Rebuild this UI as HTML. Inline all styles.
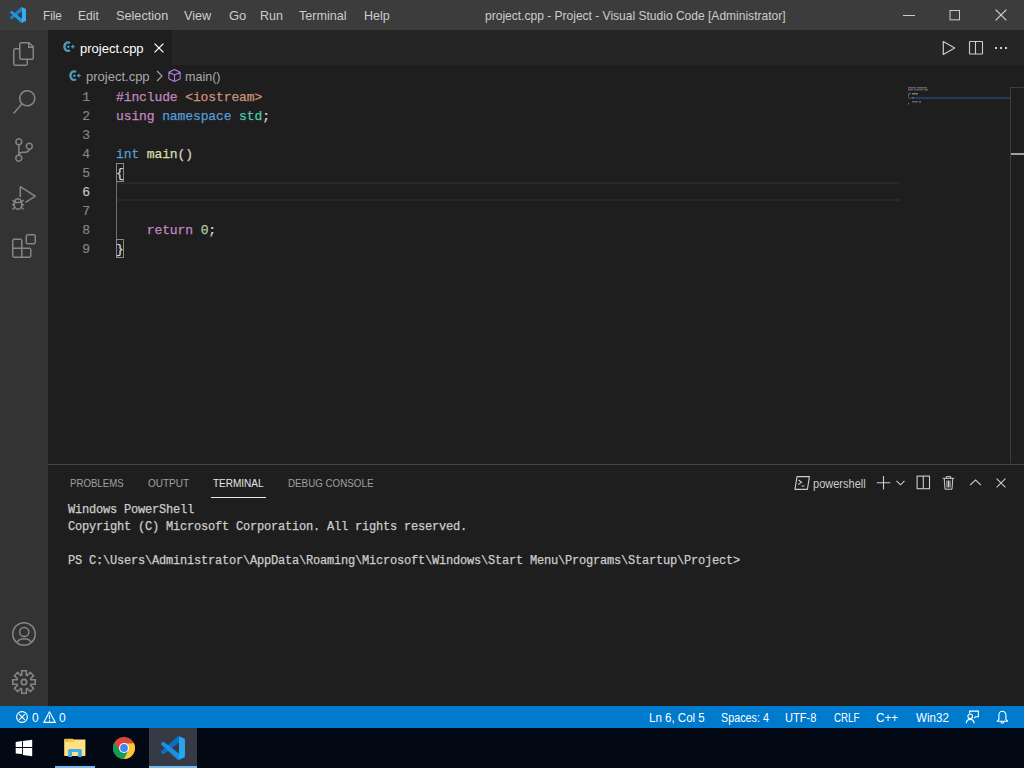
<!DOCTYPE html>
<html><head><meta charset="utf-8">
<style>
*{margin:0;padding:0;box-sizing:border-box}
html,body{width:1024px;height:768px;overflow:hidden;background:#1e1e1e;font-family:"Liberation Sans",sans-serif;}
.abs{position:absolute}
svg{position:absolute;overflow:visible}
#title{left:0;top:0;width:1024px;height:30px;background:#3c3c3c;color:#cccccc;font-size:13px}
.m{position:absolute;top:8px;white-space:nowrap;line-height:15px}
#act{left:0;top:30px;width:48px;height:676px;background:#333333}
#tabs{left:48px;top:30px;width:976px;height:35px;background:#252526}
#tab{left:48px;top:30px;width:124px;height:35px;background:#1e1e1e}
#panel{left:48px;top:464px;width:976px;height:242px;background:#1e1e1e;border-top:1px solid #444}
#status{left:0;top:706px;width:1024px;height:22px;background:#007acc;color:#fff;font-size:12px}
#task{left:0;top:728px;width:1024px;height:40px;background:#020814}
.code{font-family:"Liberation Mono",monospace;font-size:13px;white-space:pre;position:absolute;line-height:19px;letter-spacing:-0.11px;-webkit-text-stroke:0.25px currentColor}
.ln{position:absolute;left:48px;width:42px;text-align:right;font-family:"Liberation Mono",monospace;font-size:13px;line-height:19px;color:#858585;-webkit-text-stroke:0.2px currentColor}
.term{font-family:"Liberation Mono",monospace;font-size:12px;white-space:pre;position:absolute;line-height:17px;color:#cccccc;letter-spacing:-0.2px;-webkit-text-stroke:0.25px currentColor}
.ptab{position:absolute;top:477px;font-size:11px;color:#a0a0a0;line-height:13px;white-space:nowrap}
.st{position:absolute;top:711px;line-height:14px;white-space:nowrap}
.k{color:#c586c0}.s{color:#ce9178}.b{color:#569cd6}.t{color:#4ec9b0}.p{color:#d4d4d4}.f{color:#dcdcaa}.n{color:#b5cea8}
</style></head><body>
<div id="title" class="abs">
  <svg style="left:10px;top:7px" width="16" height="16" viewBox="0 0 100 100"><path fill="#1a84d0" d="M75.8 0.9L75 27.3 12.2 75a4.2 4.2 0 0 1-5.3-.2l-5.5-5a4.2 4.2 0 0 1 0-6.2L68.7 2.1a6.2 6.2 0 0 1 7.1-1.2z"/><path fill="#2196e4" d="M12.2 25L75 72.7 75.8 99.1a6.2 6.2 0 0 1-7.1-1.2L1.4 36.5a4.2 4.2 0 0 1 0-6.2l5.5-5a4.2 4.2 0 0 1 5.3-.2z"/><path fill="#3aabf2" d="M75 .9 96.4 10.8a6.3 6.3 0 0 1 3.5 5.6v67.2a6.3 6.3 0 0 1-3.5 5.6L75.8 99.1 75 99.3z"/></svg>
  <div class="m" style="transform:scaleX(0.900);transform-origin:0 0;left:43px">File</div>
  <div class="m" style="transform:scaleX(0.926);transform-origin:0 0;left:78px">Edit</div>
  <div class="m" style="transform:scaleX(0.977);transform-origin:0 0;left:116px">Selection</div>
  <div class="m" style="transform:scaleX(0.975);transform-origin:0 0;left:184px">View</div>
  <div class="m" style="left:229px">Go</div>
  <div class="m" style="transform:scaleX(0.957);transform-origin:0 0;left:260px">Run</div>
  <div class="m" style="transform:scaleX(0.969);transform-origin:0 0;left:299px">Terminal</div>
  <div class="m" style="transform:scaleX(0.963);transform-origin:0 0;left:364px">Help</div>
  <div class="m" style="transform:scaleX(0.925);transform-origin:0 0;left:485px">project.cpp - Project - Visual Studio Code [Administrator]</div>
  <svg style="left:903px;top:15px" width="12" height="1"><rect x="0" y="0" width="12" height="1" fill="#cccccc"/></svg>
  <svg style="left:949px;top:10px" width="11" height="11"><rect x="1" y="0.5" width="9.5" height="9.3" fill="none" stroke="#cccccc" stroke-width="1"/></svg>
  <svg style="left:995px;top:9px" width="12" height="12"><path d="M0.6 0.6L11.4 11.4M11.4 0.6L0.6 11.4" stroke="#cccccc" stroke-width="1.3"/></svg>
</div>

<div id="act" class="abs">
  <!-- files -->
  <svg style="left:12px;top:12px" width="24" height="24" viewBox="0 0 24 24"><path fill="#858585" d="M17.5 0h-9L7 1.5V6H2.5L1 7.5v15.07L2.5 24h12.07L16 22.57V18h4.7l1.3-1.43V4.5L17.5 0zm0 2.12l2.38 2.38H17.5V2.12zm-3 20.38h-12v-15H7v9.07L8.5 18h6v4.5zm6-6h-12v-15H16V6h4.5v10.5z"/></svg>
  <!-- search -->
  <svg style="left:12px;top:60px" width="24" height="24" viewBox="0 0 24 24"><path fill="#858585" d="M15.25 0a8.25 8.25 0 0 0-6.18 13.72L1 22.88l1.12 1 8.05-9.12A8.251 8.251 0 1 0 15.25.01V0zm0 15a6.75 6.75 0 1 1 0-13.5 6.75 6.75 0 0 1 0 13.5z"/></svg>
  <!-- scm -->
  <svg style="left:12px;top:108px" width="24" height="24" viewBox="0 0 24 24"><path fill="#858585" d="M21.007 8.222A3.738 3.738 0 0 0 15.045 5.2a3.737 3.737 0 0 0 1.156 6.583 2.988 2.988 0 0 1-2.668 1.67h-2.99a4.456 4.456 0 0 0-2.989 1.165V7.4a3.737 3.737 0 1 0-1.494 0v9.117a3.776 3.776 0 1 0 1.816.099 2.99 2.99 0 0 1 2.668-1.667h2.99a4.484 4.484 0 0 0 4.223-3.039 3.736 3.736 0 0 0 3.250-3.687zM4.565 3.738a2.242 2.242 0 1 1 4.484 0 2.242 2.242 0 0 1-4.484 0zm4.484 16.441a2.242 2.242 0 1 1-4.484 0 2.242 2.242 0 0 1 4.484 0zm8.221-9.715a2.242 2.242 0 1 1 0-4.485 2.242 2.242 0 0 1 0 4.485z"/></svg>
  <!-- debug -->
  <svg style="left:12px;top:156px" width="24" height="24" viewBox="0 0 24 24"><path fill="#858585" d="M10.94 13.5l-1.32 1.32a3.73 3.73 0 0 0-7.24 0L1.06 13.5 0 14.56l1.72 1.72-.22.22V18H0v1.5h1.5v.08c.077.489.214.966.41 1.42L0 22.94 1.06 24l1.65-1.65A4.308 4.308 0 0 0 6 24a4.31 4.31 0 0 0 3.29-1.650L10.94 24 12 22.94 10.09 21c.198-.464.336-.951.41-1.45v-.1H12V18h-1.5v-1.5l-.22-.22L12 14.56l-1.06-1.06zM6 13.5a2.25 2.25 0 0 1 2.25 2.25h-4.5A2.25 2.25 0 0 1 6 13.5zm3 6a3.33 3.33 0 0 1-3 3 3.33 3.33 0 0 1-3-3v-2.25h6v2.25zm14.76-9.9v1.26L13.5 17.37V15.6l8.45-5.37L9 2v9.46a5.07 5.07 0 0 0-1.500-.72V.63L8.64 0l15.12 9.6z"/></svg>
  <!-- extensions -->
  <svg style="left:12px;top:204px" width="24" height="24" viewBox="0 0 24 24"><path fill="#858585" d="M13.5 1.5L15 0h7.5L24 1.5V9l-1.5 1.5H15L13.5 9V1.5zm1.5 0V9h7.5V1.5H15zM0 15V6l1.5-1.5H9L10.5 6v7.5H18l1.5 1.5v7.5L18 24H1.5L0 22.5V15zm9-1.5V6H1.5v7.5H9zM9 15H1.5v7.5H9V15zm1.5 7.5H18V15h-7.5v7.5z"/></svg>
  <!-- accounts -->
  <svg style="left:12px;top:592px" width="24" height="24" viewBox="0 0 24 24"><circle cx="12" cy="12" r="11.25" fill="none" stroke="#858585" stroke-width="1.5"/><circle cx="12.2" cy="10" r="4.6" fill="none" stroke="#858585" stroke-width="1.5"/><path d="M4.8 20.6A8.2 6.6 0 0 1 19.6 20.6" fill="none" stroke="#858585" stroke-width="1.5"/></svg>
  <!-- gear -->
  <svg style="left:12px;top:640px" width="24" height="24" viewBox="0 0 24 24"><path d="M9.70 5.07L9.70 0.80L14.30 0.80L14.30 5.07A7.30 7.30 0 0 1 15.27 5.47L18.29 2.45L21.55 5.71L18.53 8.73A7.30 7.30 0 0 1 18.93 9.70L23.20 9.70L23.20 14.30L18.93 14.30A7.30 7.30 0 0 1 18.53 15.27L21.55 18.29L18.29 21.55L15.27 18.53A7.30 7.30 0 0 1 14.30 18.93L14.30 23.20L9.70 23.20L9.70 18.93A7.30 7.30 0 0 1 8.73 18.53L5.71 21.55L2.45 18.29L5.47 15.27A7.30 7.30 0 0 1 5.07 14.30L0.80 14.30L0.80 9.70L5.07 9.70A7.30 7.30 0 0 1 5.47 8.73L2.45 5.71L5.71 2.45L8.73 5.47A7.30 7.30 0 0 1 9.70 5.07Z" fill="none" stroke="#858585" stroke-width="1.6" stroke-linejoin="miter"/><circle cx="12" cy="12" r="2.7" fill="none" stroke="#858585" stroke-width="1.7"/></svg>
</div>

<div id="tabs" class="abs"></div>
<div id="tab" class="abs"></div>
<!-- tab content -->
<svg style="left:62px;top:41px" width="13" height="12" viewBox="0 0 13 12"><path d="M7.9 2.1A3.4 4.3 0 1 0 7.9 9.1" fill="none" stroke="#519aba" stroke-width="2.3"/><path d="M5 5.7h2.6M6.3 4.4v2.6M8.9 5.7h3.8M10.8 3.8v3.8" stroke="#519aba" stroke-width="1.2"/></svg>
<div class="abs" style="left:80px;top:41px;font-size:13px;color:#ffffff;line-height:15px;white-space:nowrap">project.cpp</div>
<svg style="left:153.5px;top:43px" width="10" height="10"><path d="M0.6 0.6L9.4 9.4M9.4 0.6L0.6 9.4" stroke="#ffffff" stroke-width="1.3"/></svg>
<!-- tab actions -->
<svg style="left:942px;top:40px" width="14" height="16" viewBox="0 0 14 16"><path d="M1.3 1.6v12.8L12.7 8z" fill="none" stroke="#cccccc" stroke-width="1.2" stroke-linejoin="round"/></svg>
<svg style="left:968px;top:40px" width="16" height="16"><rect x="1.5" y="1.5" width="13" height="12.5" fill="none" stroke="#cccccc" stroke-width="1.1" rx="0.5"/><path d="M7.5 1.5v12.5" stroke="#cccccc" stroke-width="1.1"/></svg>
<svg style="left:995px;top:47px" width="14" height="3"><rect x="0" y="0" width="2" height="2" fill="#cccccc"/><rect x="5" y="0" width="2" height="2" fill="#cccccc"/><rect x="10" y="0" width="2" height="2" fill="#cccccc"/></svg>
<!-- breadcrumbs -->
<svg style="left:68px;top:70px" width="13" height="12" viewBox="0 0 13 12"><path d="M7.9 2.1A3.4 4.3 0 1 0 7.9 9.1" fill="none" stroke="#519aba" stroke-width="2.3"/><path d="M5 5.7h2.6M6.3 4.4v2.6M8.9 5.7h3.8M10.8 3.8v3.8" stroke="#519aba" stroke-width="1.2"/></svg>
<div class="abs" style="left:86px;top:69px;font-size:13px;color:#a9a9a9;line-height:15px;white-space:nowrap">project.cpp</div>
<svg style="left:155.5px;top:70px" width="7" height="12"><path d="M1 1l5 5-5 5" fill="none" stroke="#a9a9a9" stroke-width="1.1"/></svg>
<svg style="left:167px;top:68px" width="15" height="15" viewBox="0 0 16 16"><path d="M8 1.5L14 4.5V11.5L8 14.5L2 11.5V4.5Z M2 4.5L8 7.5L14 4.5 M8 7.5V14.5" fill="none" stroke="#b180d7" stroke-width="1.15" stroke-linejoin="round"/></svg>
<div class="abs" style="transform:scaleX(0.965);transform-origin:0 0;left:185px;top:69px;font-size:13px;color:#a9a9a9;line-height:15px;white-space:nowrap">main()</div>
<!-- editor -->
<div class="abs" style="left:116px;top:182px;width:784px;height:19px;border-top:2px solid #282828;border-bottom:2px solid #282828"></div>
<div class="abs" style="left:116px;top:182px;width:1px;height:57px;background:#707070"></div>
<div class="abs" style="left:116px;top:163px;width:8px;height:19px;border:1px solid #888888;background:#0f2a1a33"></div>
<div class="abs" style="left:116px;top:239px;width:8px;height:19px;border:1px solid #888888;background:#0f2a1a33"></div>
<div class="ln" style="top:88px">1</div>
<div class="ln" style="top:107px">2</div>
<div class="ln" style="top:126px">3</div>
<div class="ln" style="top:145px">4</div>
<div class="ln" style="top:164px">5</div>
<div class="ln" style="top:183px;color:#c6c6c6">6</div>
<div class="ln" style="top:202px">7</div>
<div class="ln" style="top:221px">8</div>
<div class="ln" style="top:240px">9</div>
<div class="code" style="left:116px;top:88px"><span class="k">#include</span> <span class="s">&lt;iostream&gt;</span>
<span class="k">using</span> <span class="b">namespace</span> <span class="t">std</span><span class="p">;</span>

<span class="b">int</span> <span class="f">main</span><span class="p">()</span>
<span class="p">{</span>


<span class="p">    </span><span class="k">return</span> <span class="n">0</span><span class="p">;</span>
<span class="p">}</span></div>
<!-- minimap -->
<div class="abs" style="left:908px;top:97px;width:102px;height:2px;background:#223d5c"></div>
<svg style="left:908px;top:87px" width="100" height="20">
<rect x="0" y="0" width="8" height="1.5" fill="#c586c0" opacity="0.5"/><rect x="9" y="0" width="10" height="1.5" fill="#ce9178" opacity="0.5"/>
<rect x="0" y="2" width="5" height="1.5" fill="#c586c0" opacity="0.5"/><rect x="6" y="2" width="9" height="1.5" fill="#569cd6" opacity="0.5"/><rect x="16" y="2" width="4" height="1.5" fill="#4ec9b0" opacity="0.5"/>
<rect x="0" y="6" width="3" height="1.5" fill="#569cd6" opacity="0.5"/><rect x="4" y="6" width="6" height="1.5" fill="#dcdcaa" opacity="0.5"/>
<rect x="0" y="8" width="1" height="1.5" fill="#d4d4d4" opacity="0.5"/>
<rect x="4" y="10" width="2" height="1.5" fill="#3b8eea" opacity="0.6"/>
<rect x="4" y="14" width="6" height="1.5" fill="#c586c0" opacity="0.5"/><rect x="11" y="14" width="2" height="1.5" fill="#b5cea8" opacity="0.5"/>
<rect x="0" y="16" width="1" height="1.5" fill="#d4d4d4" opacity="0.5"/>
</svg>
<div class="abs" style="left:1010px;top:87px;width:1px;height:376px;background:#3e3e3e"></div>
<div class="abs" style="left:1011px;top:87px;width:13px;height:1px;background:#3e3e3e"></div>
<div class="abs" style="left:1011px;top:153px;width:13px;height:2px;background:#a0a0a0"></div>

<div id="panel" class="abs"></div>
<div class="ptab" style="transform:scaleX(0.877);transform-origin:0 0;left:70px">PROBLEMS</div>
<div class="ptab" style="transform:scaleX(0.909);transform-origin:0 0;left:148px">OUTPUT</div>
<div class="ptab" style="transform:scaleX(0.909);transform-origin:0 0;left:213px;color:#e7e7e7">TERMINAL</div>
<div class="ptab" style="transform:scaleX(0.890);transform-origin:0 0;left:288px">DEBUG CONSOLE</div>
<div class="abs" style="left:211px;top:497px;width:55px;height:1px;background:#e7e7e7"></div>
<!-- panel actions -->
<svg style="left:794px;top:476px" width="16" height="14" viewBox="0 0 16 14"><path d="M3 0.6h12.4l-2 12.8H1z" fill="none" stroke="#cccccc" stroke-width="1.1" stroke-linejoin="round"/><path d="M4.5 4l3 2.3-3.3 2.3M7.5 10h3" fill="none" stroke="#cccccc" stroke-width="1.1"/></svg>
<div class="abs" style="transform:scaleX(0.919);transform-origin:0 0;left:813px;top:477px;font-size:12px;color:#cccccc;line-height:14px;white-space:nowrap">powershell</div>
<svg style="left:876px;top:476px" width="15" height="14"><path d="M7.5 0v13.5M0.8 6.8h13.5" stroke="#cccccc" stroke-width="1.1"/></svg>
<svg style="left:896px;top:480px" width="9" height="6"><path d="M0.5 0.8l4 4 4-4" fill="none" stroke="#cccccc" stroke-width="1.1"/></svg>
<svg style="left:916px;top:475px" width="15" height="15"><rect x="1.1" y="1.1" width="12.4" height="12.6" fill="none" stroke="#cccccc" stroke-width="1.1"/><path d="M7.3 1v12.5" stroke="#cccccc" stroke-width="1.1"/></svg>
<svg style="left:942px;top:476px" width="13" height="14" viewBox="0 0 13 14"><path d="M0.8 2.3h11.4M4.3 2.3V0.6h4.4v1.7M2.2 2.3l0.8 10.9h7l0.8-10.9M5 4.5v7M6.5 4.5v7M8 4.5v7" fill="none" stroke="#cccccc" stroke-width="1"/></svg>
<svg style="left:969px;top:479px" width="13" height="7"><path d="M1 6.2l5.5-5.2 5.5 5.2" fill="none" stroke="#cccccc" stroke-width="1.1"/></svg>
<svg style="left:996px;top:478px" width="10" height="10"><path d="M0.6 0.6L9.4 9.4M9.4 0.6L0.6 9.4" stroke="#cccccc" stroke-width="1.1"/></svg>
<div class="term" style="left:68px;top:502px">Windows PowerShell
Copyright (C) Microsoft Corporation. All rights reserved.

PS C:\Users\Administrator\AppData\Roaming\Microsoft\Windows\Start Menu\Programs\Startup\Project&gt;</div>
<div id="status" class="abs"></div>
<svg style="left:16px;top:711px" width="12" height="12" viewBox="0 0 12 12"><circle cx="6" cy="6" r="5.4" fill="none" stroke="#fff" stroke-width="1.1"/><path d="M3.1 3.1l5.8 5.8M8.9 3.1l-5.8 5.8" stroke="#fff" stroke-width="1.1"/></svg>
<div class="st" style="left:32px;color:#fff;font-size:12px">0</div>
<svg style="left:43px;top:711px" width="13" height="12" viewBox="0 0 13 12"><path d="M6.5 0.8L12.3 11.4H0.7z" fill="none" stroke="#fff" stroke-width="1.1" stroke-linejoin="round"/><path d="M6.5 4v4.2M6.5 9.2v1.2" stroke="#fff" stroke-width="1.1"/></svg>
<div class="st" style="left:59px;color:#fff;font-size:12px">0</div>
<div class="st" style="transform:scaleX(0.960);transform-origin:0 0;left:649px;color:#fff;font-size:12px">Ln 6, Col 5</div>
<div class="st" style="transform:scaleX(0.898);transform-origin:0 0;left:721px;color:#fff;font-size:12px">Spaces: 4</div>
<div class="st" style="transform:scaleX(0.921);transform-origin:0 0;left:785px;color:#fff;font-size:12px">UTF-8</div>
<div class="st" style="transform:scaleX(0.810);transform-origin:0 0;left:834px;color:#fff;font-size:12px">CRLF</div>
<div class="st" style="transform:scaleX(0.974);transform-origin:0 0;left:876px;color:#fff;font-size:12px">C++</div>
<div class="st" style="transform:scaleX(0.965);transform-origin:0 0;left:916px;color:#fff;font-size:12px">Win32</div>
<svg style="left:965px;top:710px" width="15" height="14" viewBox="0 0 15 14"><circle cx="5.2" cy="6.3" r="2.3" fill="none" stroke="#fff" stroke-width="1.1"/><path d="M1.2 13.3c0.3-2.5 1.9-3.9 4-3.9s3.7 1.4 4 3.9M4.6 3.2V1.1h8.8v5.7H10.6l-1.5 1.4" fill="none" stroke="#fff" stroke-width="1.1"/></svg>
<svg style="left:996px;top:710px" width="13" height="14" viewBox="0 0 13 14"><path d="M6.3 1.3C4.3 1.3 2.9 2.9 2.9 5.2V9.3L1.3 11.2H11.5L9.9 9.3V5.2C9.9 2.9 8.4 1.3 6.3 1.3z" fill="none" stroke="#fff" stroke-width="1.1" stroke-linejoin="round"/><path d="M4.9 11.6a1.5 1.5 0 0 0 3 0" fill="none" stroke="#fff" stroke-width="1.1"/></svg>
<div id="task" class="abs"></div>
<svg style="left:15px;top:739px" width="18" height="18"><path fill="#fff" d="M0.7 3L7 2.1V8H0.7zM7.9 1.9L17.2 0.7V8H7.9zM0.7 9H7V15.1L0.7 14.4zM7.9 9H17.2V17.3L7.9 16.1z"/></svg>
<div class="abs" style="left:55px;top:766px;width:40px;height:2px;background:#76b9ed"></div>
<svg style="left:64px;top:738px" width="22" height="20"><path d="M0.2 2.6A1 1 0 0 1 1.2 1.6h20.2V17.2a0.8 0.8 0 0 1-0.8 0.8H1a0.8 0.8 0 0 1-0.8-0.8z" fill="#ffe083"/><path d="M0.2 1.8A1 1 0 0 1 1.2 0.8h7.6l1.4 1.3v2H0.2z" fill="#f6c745"/><rect x="2" y="1.9" width="1.4" height="1.1" fill="#58b0d0"/><path d="M4.1 19V12.4A1.5 1.5 0 0 1 5.6 10.9H16.3A1.5 1.5 0 0 1 17.8 12.4V19H14V14H8V19Z" fill="#39b0ec"/></svg>
<svg style="left:113px;top:737px" width="22" height="22" viewBox="0 0 22 22"><circle cx="11" cy="11" r="11" fill="#db4437"/><path d="M11 11L1.5 5.5A11 11 0 0 0 11 22z" fill="#0f9d58"/><path d="M11 11L20.5 5.5A11 11 0 0 1 11 22z" fill="#fcc934"/><path d="M11 6.2h9.5A11 11 0 0 1 11 22L6.8 13.5z" fill="#fcc934"/><path d="M1.5 5.5A11 11 0 0 0 11 22l4.2-8.5z" fill="#0f9d58"/><path d="M11 6.2h9.5A11 11 0 0 0 1.5 5.5l4.2 7.5z" fill="#db4437"/><circle cx="11" cy="11" r="5" fill="#fff"/><circle cx="11" cy="11" r="3.9" fill="#4285f4"/></svg>
<div class="abs" style="left:149px;top:728px;width:48px;height:40px;background:#363a44"></div>
<div class="abs" style="left:149px;top:766px;width:48px;height:2px;background:#76b9ed"></div>
<svg style="left:161px;top:736px" width="24" height="24" viewBox="0 0 100 100"><path fill="#0870c0" d="M75.8 0.9L75 27.3 12.2 75a4.2 4.2 0 0 1-5.3-.2l-5.5-5a4.2 4.2 0 0 1 0-6.2L68.7 2.1a6.2 6.2 0 0 1 7.1-1.2z"/><path fill="#1a8ee0" d="M12.2 25L75 72.7 75.8 99.1a6.2 6.2 0 0 1-7.1-1.2L1.4 36.5a4.2 4.2 0 0 1 0-6.2l5.5-5a4.2 4.2 0 0 1 5.3-.2z"/><path fill="#25a7ef" d="M75 .9 96.4 10.8a6.3 6.3 0 0 1 3.5 5.6v67.2a6.3 6.3 0 0 1-3.5 5.6L75.8 99.1 75 99.3z"/></svg>
</body></html>
